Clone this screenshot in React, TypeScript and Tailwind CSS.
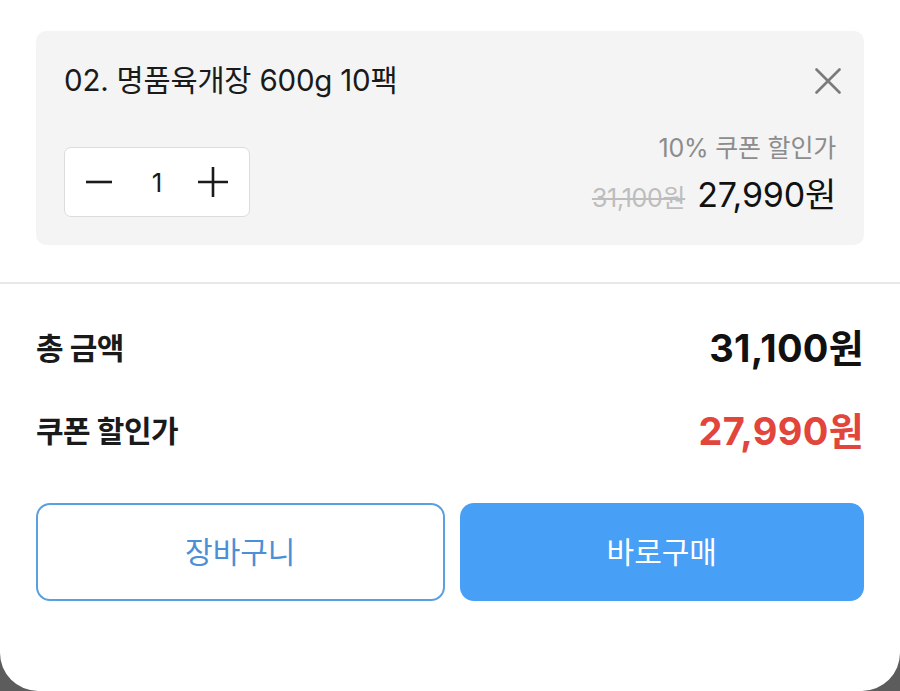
import React from "react";

const font = { fontFamily: 'Inter, "Noto Sans CJK KR", sans-serif' };

export default function App() {
  return (
    <div className="w-[900px] h-[691px] bg-[#5c5c5c]" style={font}>
      <div className="w-full h-[691px] bg-white rounded-b-[38px] flex flex-col overflow-hidden">
        <div className="px-[36px] pt-[31px]">
          <div className="bg-[#f4f4f4] rounded-[10px] h-[214px] pl-[28px] pr-[28px] pt-[29px] pb-[28px] flex flex-col justify-between">
            <div className="flex items-start justify-between">
              <div className="text-[29.5px] leading-[40px] text-[#1a1a1a] tracking-[-0.2px]">02. 명품육개장 600g 10팩</div>
              <svg width="26" height="26" viewBox="0 0 26 26" className="mt-[8px] -mr-[5px]">
                <path d="M1.5 1.5 L24.5 24.5 M24.5 1.5 L1.5 24.5" stroke="#7b7b7b" strokeWidth="2.6" strokeLinecap="round" />
              </svg>
            </div>
            <div className="flex items-end justify-between">
              <div className="w-[186px] h-[70px] bg-white border border-[#dcdcdc] rounded-[7px] flex items-center justify-between px-[20px]">
                <svg width="28" height="28" viewBox="0 0 28 28">
                  <path d="M1 14 H27" stroke="#1a1a1a" strokeWidth="2.6" />
                </svg>
                <span className="text-[26px] text-[#1a1a1a] pl-[4px]">1</span>
                <svg width="32" height="32" viewBox="0 0 32 32">
                  <path d="M1 16 H31 M16 1 V31" stroke="#1a1a1a" strokeWidth="2.6" />
                </svg>
              </div>
              <div className="flex flex-col items-end">
                <div className="text-[25px] leading-[34px] text-[#8c8c8c] tracking-[-0.2px]">10% 쿠폰 할인가</div>
                <div className="flex items-baseline mt-[9px]">
                  <span className="text-[25px] text-[#bdbdbd] line-through tracking-[-0.3px]">31,100원</span>
                  <span className="text-[34px] leading-[42px] text-[#111] ml-[12px] tracking-[-0.2px]">27,990원</span>
                </div>
              </div>
            </div>
          </div>
        </div>
        <div className="h-[2px] bg-[#e8e8e8] mt-[37px]" />
        <div className="px-[36px] pt-[44px]">
          <div className="flex items-center justify-between h-[40px]">
            <span className="text-[30px] font-bold text-[#1a1a1a] tracking-[-0.5px]">총 금액</span>
            <span className="text-[38px] font-bold text-[#111] tracking-[0.3px]">31,100원</span>
          </div>
          <div className="flex items-center justify-between h-[40px] mt-[43px]">
            <span className="text-[30px] font-bold text-[#1a1a1a] tracking-[-0.5px]">쿠폰 할인가</span>
            <span className="text-[38px] font-bold text-[#e2453c] tracking-[0.3px]">27,990원</span>
          </div>
          <div className="flex gap-[15px] mt-[52px]">
            <button className="flex-1 h-[98px] border-2 border-[#5a9fe0] rounded-[14px] text-[30px] text-[#4b8fd6] bg-white">장바구니</button>
            <button className="flex-1 h-[98px] rounded-[14px] text-[30px] text-white bg-[#479ff6]">바로구매</button>
          </div>
        </div>
      </div>
    </div>
  );
}
